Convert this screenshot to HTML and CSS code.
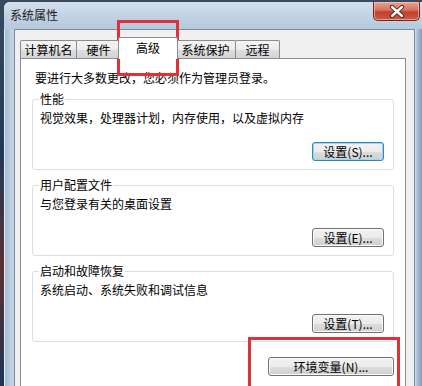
FILE: index.html
```html
<!DOCTYPE html>
<html lang="zh-CN">
<head>
<meta charset="utf-8">
<title>系统属性</title>
<link rel="stylesheet" href="styles.css">
</head>
<body>
<div class="screen">
  <div class="frame">
    <div class="titlebar">
      <span class="title">系统属性</span>
      <div class="close">
        <svg width="16" height="13" viewBox="0 0 16 13"><path d="M3 2 L13 11 M13 2 L3 11" stroke="#4a1a14" stroke-width="4.2" stroke-linecap="round"/><path d="M3 2 L13 11 M13 2 L3 11" stroke="#ffffff" stroke-width="2.4" stroke-linecap="round"/></svg>
      </div>
    </div>
    <div class="client">
      <div class="tabs">
        <div class="tab t1">计算机名</div>
        <div class="tab t2">硬件</div>
        <div class="tab t3 active">高级</div>
        <div class="tab t4">系统保护</div>
        <div class="tab t5">远程</div>
      </div>
      <div class="panel">
        <p class="intro">要进行大多数更改，您必须作为管理员登录。</p>
        <fieldset class="group g1">
          <legend>性能</legend>
          <p class="desc">视觉效果，处理器计划，内存使用，以及虚拟内存</p>
          <div class="row"><button class="btn focus">设置(S)...</button></div>
        </fieldset>
        <fieldset class="group">
          <legend>用户配置文件</legend>
          <p class="desc">与您登录有关的桌面设置</p>
          <div class="row"><button class="btn">设置(E)...</button></div>
        </fieldset>
        <fieldset class="group">
          <legend>启动和故障恢复</legend>
          <p class="desc">系统启动、系统失败和调试信息</p>
          <div class="row"><button class="btn">设置(T)...</button></div>
        </fieldset>
        <div class="env-row"><button class="btn env">环境变量(N)...</button></div>
      </div>
    </div>
  </div>
  <div class="mark mark-tab"></div>
  <div class="mark mark-env"></div>
</div>
</body>
</html>
```

FILE: styles.css
```css
html, body {
  margin: 0;
  padding: 0;
}
body {
  font-family: "Noto Sans CJK SC", "Liberation Sans", sans-serif;
  font-size: 12px;
  color: #000;
}
.screen {
  position: relative;
  width: 422px;
  height: 386px;
  overflow: hidden;
  background: linear-gradient(to bottom, #3a4a5e 0%, #22385a 40%, #5a3030 70%, #1e3458 100%);
}
.frame {
  margin-left: 4px;
  margin-top: 2px;
  width: 430px;
  height: 400px;
  border-radius: 6px 0 0 0;
  background: linear-gradient(to right, #9fb7d0 0px, #c3d4e5 8px, #c8d7e6 300px, #d3e0ec 411px, #a9c0d9 413px, #7f9dc0 418px);
  box-shadow: inset 1px 1px 0 #e6eef6;
}
.titlebar {
  display: flex;
  align-items: flex-start;
  height: 27px;
  background: linear-gradient(to bottom, #d3dfeb 0%, #bfd0e2 60%, #b6cade 100%);
  border-radius: 6px 0 0 0;
}
.title {
  margin-left: 6px;
  margin-top: 6px;
  line-height: 14px;
  color: #1a1a1a;
}
.close {
  margin-left: auto;
  margin-right: 14px;
  width: 45px;
  height: 18px;
  border: 1px solid #6e2a22;
  border-top: none;
  border-radius: 0 0 5px 5px;
  background: linear-gradient(to bottom, #e8a596 0%, #d6715f 45%, #c0402c 55%, #cf5a3e 100%);
  box-shadow: inset 0 0 0 1px rgba(255, 210, 200, 0.55);
  display: flex;
  align-items: center;
  justify-content: center;
}
.close svg {
  display: block;
}
.client {
  margin-left: 10px;
  height: 370px;
  border: 1px solid #7c8c9e;
  border-bottom: none;
  background: #f0f0f0;
  padding: 0 8px 0 5px;
  box-sizing: border-box;
  width: 401px;
}
.tabs {
  display: flex;
  align-items: flex-end;
  height: 28px;
  position: relative;
  z-index: 2;
}
.tab {
  box-sizing: border-box;
  height: 18px;
  border: 1px solid #898c95;
  border-bottom: none;
  border-radius: 2px 2px 0 0;
  background: linear-gradient(to bottom, #f4f4f4 0%, #ececec 50%, #dedede 51%, #d4d4d4 100%);
  text-align: center;
  line-height: 14px;
  padding-top: 2px;
  white-space: nowrap;
}
.t1 { width: 57px; }
.t2 { width: 45px; margin-left: -1px; }
.t3 { width: 60px; }
.t4 { width: 61px; margin-left: -1px; }
.t5 { width: 45px; margin-left: -1px; }
.tab.active {
  height: 22px;
  margin-left: -3px;
  margin-right: -2px;
  margin-bottom: -1px;
  background: #ffffff;
  padding-top: 3px;
  position: relative;
  z-index: 3;
}
.panel {
  box-sizing: border-box;
  width: 386px;
  height: 340px;
  border: 1px solid #898c95;
  background: #ffffff;
  padding: 12px 11px 0 11px;
}
.intro {
  margin: 0 0 0 3px;
  line-height: 14px;
}
.group {
  margin: 7px 0 0 0;
  padding: 0 9px 8px 7px;
  border: 1px solid #d5dfe5;
  border-radius: 3px;
  min-width: 0;
}
.group + .group {
  margin-top: 8px;
}
.group legend {
  padding: 0 1px;
  margin-left: -1px;
  line-height: 14px;
}
.desc {
  margin: 5px 0 0 0;
  line-height: 14px;
}
.row {
  display: flex;
  justify-content: flex-end;
  margin-top: 17px;
}
.btn {
  box-sizing: border-box;
  width: 72px;
  height: 19px;
  padding: 0;
  font-family: "Noto Sans CJK SC", "Liberation Sans", sans-serif;
  font-size: 12px;
  line-height: 14px;
  color: #000;
  border: 1px solid #707070;
  border-radius: 3px;
  background: linear-gradient(to bottom, #f2f2f2 0%, #ebebeb 50%, #dddddd 51%, #cfcfcf 100%);
  box-shadow: inset 0 0 0 1px #fbfbfb;
}
.btn.focus {
  border-color: #3c7fb1;
  box-shadow: inset 0 0 0 1px #93dcf5;
}
.env-row {
  display: flex;
  justify-content: flex-end;
  margin-top: 15px;
}
.btn.env {
  width: 126px;
}
.mark {
  position: absolute;
  box-sizing: border-box;
  border: 3px solid #e0313a;
}
.mark-tab {
  left: 117px;
  top: 20px;
  width: 62px;
  height: 56px;
}
.mark-env {
  left: 248px;
  top: 337px;
  width: 152px;
  height: 70px;
}
```
